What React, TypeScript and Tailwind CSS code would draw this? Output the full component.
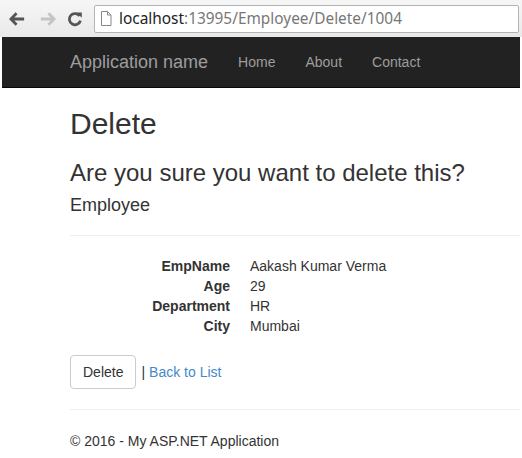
import React from "react";

const rows: [string, string][] = [
  ["EmpName", "Aakash Kumar Verma"],
  ["Age", "29"],
  ["Department", "HR"],
  ["City", "Mumbai"],
];

function BrowserBar() {
  return (
    <div className="flex h-[37px] items-center bg-gradient-to-b from-[#f6f6f6] to-[#e9e9e9] pr-[3px]">
      {/* back */}
      <svg width="17" height="14" viewBox="0 0 18 14" className="ml-[9px]">
        <path d="M8 1 L2 7 L8 13 M2 7 H16" fill="none" stroke="#555" strokeWidth="3" strokeLinejoin="miter" />
      </svg>
      {/* forward */}
      <svg width="17" height="14" viewBox="0 0 18 14" className="ml-[13px]">
        <path d="M10 1 L16 7 L10 13 M16 7 H2" fill="none" stroke="#c4c4c4" strokeWidth="3" />
      </svg>
      {/* reload */}
      <svg width="16" height="16" viewBox="0 0 16 16" className="ml-[11px]">
        <path d="M12.6 5 A5.6 5.6 0 1 0 13.4 9.6" fill="none" stroke="#555" strokeWidth="2.8" />
        <path d="M9.5 1.5 H14.8 V6.8 Z" fill="#555" />
      </svg>
      <div className="ml-[11px] flex h-[28px] flex-1 items-center rounded-[2px] border border-[#b4b4b4] bg-white">
        <svg width="12" height="15" viewBox="0 0 12 15" className="ml-[5px]">
          <path d="M1.5 0.5 H7.5 L11 4 V14.5 H1.5 Z M7.5 0.5 V4 H11" fill="none" stroke="#888" strokeWidth="1" />
        </svg>
        <span className="ml-[7px] font-['Noto_Sans',sans-serif] text-[15.4px] leading-none text-[#222]">
          localhost<span className="text-[#777]">:13995/Employee/Delete/1004</span>
        </span>
      </div>
    </div>
  );
}

function Navbar() {
  return (
    <div className="ml-[2px] mr-[2px] flex h-[51px] items-center border-b border-[#080808] bg-[#222]">
      <span className="ml-[68px] pr-[15px] text-[18px] text-[#9d9d9d]">Application name</span>
      <span className="px-[15px] text-[14px] text-[#9d9d9d]">Home</span>
      <span className="px-[15px] text-[14px] text-[#9d9d9d]">About</span>
      <span className="px-[15px] text-[14px] text-[#9d9d9d]">Contact</span>
    </div>
  );
}

export default function App() {
  return (
    <div className="h-[458px] w-[522px] overflow-hidden bg-white font-['Liberation_Sans',Arial,sans-serif] text-[14px] leading-[20px] text-[#333]">
      <BrowserBar />
      <Navbar />
      <div className="pl-[70px] pr-[2px]">
        <h2 className="mt-[19px] text-[30px] leading-[33px]">Delete</h2>
        <h3 className="mt-[20px] text-[24px] leading-[26.4px]">Are you sure you want to delete this?</h3>
        <h4 className="mt-[10px] text-[18px] leading-[19.8px]">Employee</h4>
        <hr className="mt-[19px] border-t border-[#eee]" />
        <dl className="mt-[20px] grid grid-cols-[160px_1fr] gap-x-[20px]">
          {rows.map(([k, v]) => (
            <React.Fragment key={k}>
              <dt className="text-right font-bold">{k}</dt>
              <dd>{v}</dd>
            </React.Fragment>
          ))}
        </dl>
        <div className="mt-[19px] flex items-center">
          <button className="h-[34px] rounded-[4px] border border-[#ccc] bg-white px-[12px] text-[14px] text-[#333]">
            Delete
          </button>
          <span className="ml-[5px]">|</span>
          <a className="ml-[4px] text-[#428bca]">Back to List</a>
        </div>
        <hr className="mt-[20px] border-t border-[#eee]" />
        <p className="mt-[21px]">© 2016 - My ASP.NET Application</p>
      </div>
    </div>
  );
}
